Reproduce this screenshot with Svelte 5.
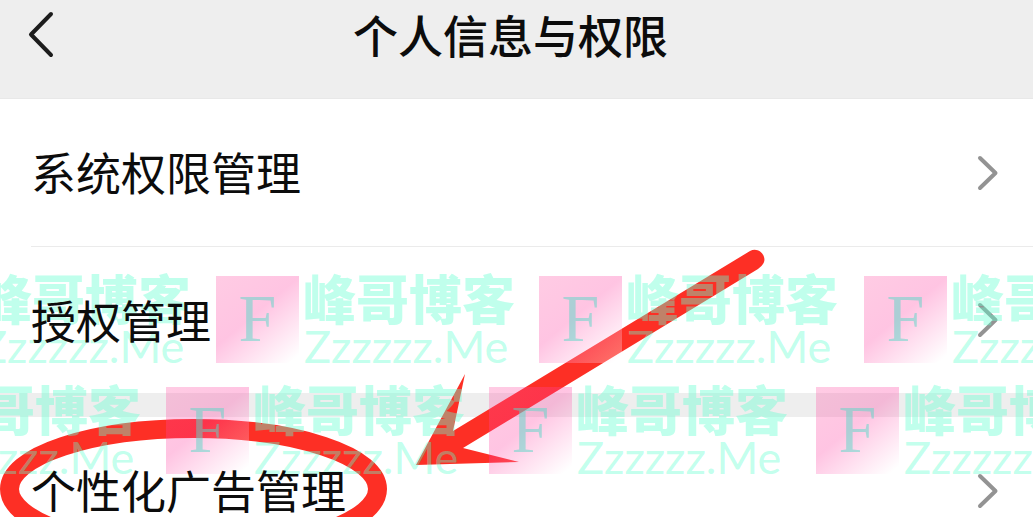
<script>
  const groups = [
    ['系统权限管理', '授权管理'],
    ['个性化广告管理']
  ];

  // Left edge and top edge of each watermark stamp.
  const stamps = [
    [-108, 276], [216, 276], [539, 276], [864, 276],
    [-158, 387], [166, 387], [489, 387], [816, 387]
  ];
</script>

<div class="page">
  <header>
    <button class="back" aria-label="返回">
      <svg width="28" height="48" viewBox="0 0 28 48" aria-hidden="true">
        <path d="M23 4 3 24.500 23 45" />
      </svg>
    </button>
    <h1>个人信息与权限</h1>
  </header>

  <main>
    {#each groups as group}
      <ul>
        {#each group as label}
          <li>
            <a href="#top">
              <span>{label}</span>
              <svg width="22" height="36" viewBox="0 0 22 36" aria-hidden="true">
                <path d="M3 3 18.500 18 3 33" />
              </svg>
            </a>
          </li>
        {/each}
      </ul>
    {/each}
  </main>

  <svg class="marks" aria-hidden="true">
    <ellipse cx="193.500" cy="489" rx="184" ry="60.500" />
    <path d="M416 465 465 374 453 431 750 251C759 246 768 257 763 264Q762 266 758 269L463 448 519 462Z" />
  </svg>

  <div class="watermark" aria-hidden="true">
    {#each stamps as [x, y]}
      <div class="stamp" style="left: {x}px; top: {y}px">
        <div class="logo">F</div>
        <div class="words">
          <div class="name">峰哥博客</div>
          <div class="site">Zzzzzz.Me</div>
        </div>
      </div>
    {/each}
  </div>
</div>

<style>
  :global(body) {
    margin: 0;
  }

  .page {
    position: relative;
    height: 100vh;
    overflow: hidden;
    background: #eee;
    color: #0c0c0c;
    font-family: "Noto Sans CJK SC", sans-serif;
  }

  header {
    display: grid;
    grid-template-columns: 60px 1fr 72px;
    align-items: start;
    height: 98px;
    border-bottom: 1px solid #e8e8e8;
    background: #eee;
  }

  .back {
    display: flex;
    margin: 0;
    padding: 10px 0 0 28px;
    border: 0;
    background: none;
  }

  svg {
    flex: none;
    fill: none;
  }

  .back path {
    stroke: #1c1c1c;
    stroke-width: 4;
    stroke-linecap: round;
    stroke-linejoin: round;
  }

  h1 {
    margin: 0;
    font-size: 45px;
    font-weight: 500;
    line-height: 70px;
    text-align: center;
    white-space: nowrap;
  }

  main {
    display: grid;
    gap: 24px;
  }

  ul {
    margin: 0;
    padding: 0;
    list-style: none;
    background: #fff;
  }

  li + li {
    margin-left: 31px;
    border-top: 1px solid #ebebeb;
  }

  li + li a {
    height: 146px;
    padding-left: 0;
  }

  a {
    display: flex;
    align-items: center;
    justify-content: space-between;
    height: 147px;
    padding: 0 34px 0 31px;
    color: inherit;
    font-size: 45px;
    text-decoration: none;
  }

  a span {
    position: relative;
    z-index: 1;
    padding-bottom: 2px;
  }

  a path {
    stroke: #939393;
    stroke-width: 4;
    stroke-linecap: round;
    stroke-linejoin: round;
  }

  .marks {
    position: absolute;
    inset: 0;
    width: 100%;
    height: 100%;
    pointer-events: none;
  }

  .marks ellipse {
    stroke: #fd2f25;
    stroke-width: 19;
  }

  .marks path {
    fill: #fd2f25;
  }

  .watermark {
    position: absolute;
    inset: 0;
    overflow: hidden;
    pointer-events: none;
  }

  .stamp {
    position: absolute;
    display: flex;
    gap: 4px;
    color: rgb(98 255 207 / 40%);
    white-space: nowrap;
  }

  .logo {
    width: 83px;
    height: 87px;
    background: linear-gradient(140deg, rgb(255 85 165 / 30%) 0%, rgb(255 60 160 / 30%) 45%, rgb(255 255 255 / 30%) 95%);
    color: rgb(90 215 200 / 50%);
    font-family: "Liberation Serif", serif;
    font-size: 68px;
    line-height: 84px;
    text-align: center;
  }

  .name {
    height: 48px;
    font-size: 53px;
    font-weight: 900;
    line-height: 42px;
  }

  .site {
    padding-left: 1px;
    font-family: Lato, sans-serif;
    font-size: 45px;
    line-height: 44px;
  }
</style>
